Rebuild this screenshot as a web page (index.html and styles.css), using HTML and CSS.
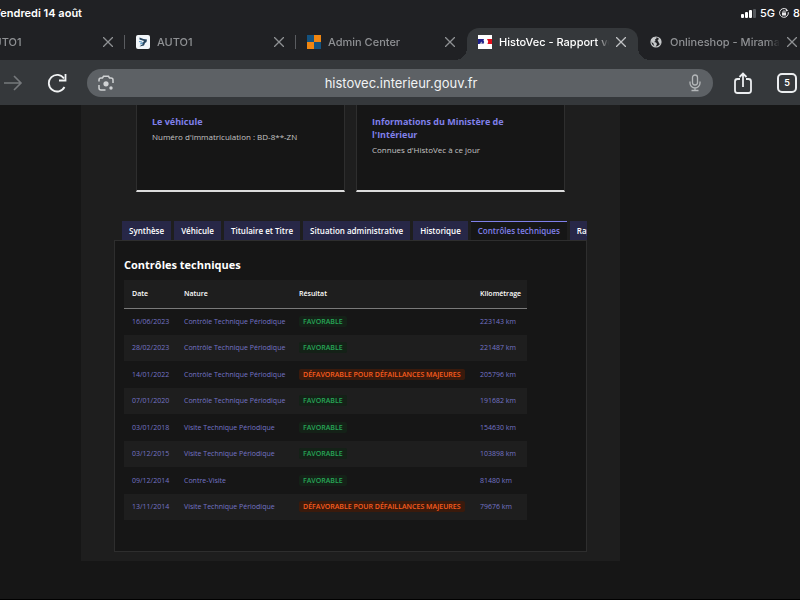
FILE: index.html
```html
<!DOCTYPE html>
<html lang="fr">
<head>
    <meta charset="UTF-8">
    <meta name="viewport" content="width=device-width, initial-scale=1.0">
    <title>HistoVec - Rapport véhicule</title>
    <link rel="stylesheet" href="styles.css">
</head>
<body>
    <header class="browser">
        <div class="status-bar">
            <span class="status-date">Vendredi 14 août</span>
            <div class="status-right">
                <svg viewBox="0 0 15 9" width="15" height="9">
                    <rect x="0" y="5" width="3" height="4" rx="1" fill="#fff"/>
                    <rect x="4" y="3" width="3" height="6" rx="1" fill="#fff"/>
                    <rect x="8" y="1" width="3" height="8" rx="1" fill="#fff"/>
                    <rect x="12" y="0" width="3" height="9" rx="1" fill="#55585c"/>
                </svg>
                <span>5G</span>
                <svg viewBox="0 0 10 10" width="10" height="10" fill="none" stroke="#e8e8ea">
                    <path d="M7.6 1.4A4.4 4.4 0 1 0 9.3 4.2"/>
                    <path d="M7 .6l2.3 2.2-2.6.7z" fill="#e8e8ea" stroke="none"/>
                    <rect x="3" y="4.6" width="4" height="2.8" rx=".5" fill="#e8e8ea" stroke="none"/>
                    <path d="M3.8 4.8V4a1.2 1.2 0 0 1 2.4 0v.8" stroke-width=".8"/>
                </svg>
                <span>8</span>
            </div>
        </div>

        <div class="tab-strip">
            <div class="browser-tab">
                <span class="favicon"></span>
                <span class="tab-title">AUTO1</span>
                <button class="close" aria-label="Fermer"><svg viewBox="0 0 10 10" width="10" height="10"><path d="M0 0L10 10M10 0L0 10"/></svg></button>
            </div>
            <div class="browser-tab">
                <svg class="favicon" viewBox="0 0 14 14">
                    <rect width="14" height="14" rx="2" fill="#f2f6fa"/>
                    <path d="M3.500 2.500l4 1.500 3.500.5-.5 2.500-1.500 1-1 2.500-4.500 1 2-1.700 1.500-.8-3-1 3-.5 1-1.500-4.500-1.500z" fill="#27455f"/>
                    <path d="M3 6.500l3 .5M4 9l3-1" stroke="#5b9bc9"/>
                </svg>
                <span class="tab-title">AUTO1</span>
                <button class="close" aria-label="Fermer"><svg viewBox="0 0 10 10" width="10" height="10"><path d="M0 0L10 10M10 0L0 10"/></svg></button>
            </div>
            <div class="browser-tab">
                <svg class="favicon" viewBox="0 0 14 14">
                    <rect width="7" height="7" fill="#14527f"/>
                    <rect x="7" width="7" height="7" fill="#ee8511"/>
                    <rect y="7" width="7" height="7" fill="#ee8511"/>
                    <rect x="7" y="7" width="7" height="7" fill="#14527f"/>
                </svg>
                <span class="tab-title">Admin Center</span>
                <button class="close" aria-label="Fermer"><svg viewBox="0 0 10 10" width="10" height="10"><path d="M0 0L10 10M10 0L0 10"/></svg></button>
            </div>
            <div class="browser-tab active">
                <svg class="favicon" viewBox="0 0 14 14">
                    <rect width="14" height="14" fill="#fff"/>
                    <path d="M0 4h6l-.5 1.500.7 1.500-1 2H0z" fill="#20208c"/>
                    <path d="M1.500 9L3.500 6.500 5 9z" fill="#a9abc4"/>
                    <path d="M9 4h5v5H9.500l.7-2.500z" fill="#e1101c"/>
                </svg>
                <span class="tab-title">HistoVec - Rapport véhicule</span>
                <button class="close" aria-label="Fermer"><svg viewBox="0 0 10 10" width="10" height="10"><path d="M0 0L10 10M10 0L0 10"/></svg></button>
            </div>
            <div class="browser-tab">
                <svg class="favicon" viewBox="0 0 14 14">
                    <circle cx="7" cy="7" r="5" fill="none" stroke="#c6c8ca" stroke-width="1.200"/>
                    <path d="M2 5l2-2.500L7 2l.5 1.500L6 4.500 6.500 6 5 7l2 .5 1 1.500-1.500 3L5 10.500 4.500 8.500 2.500 7zM8.500 5L11 3.500l1 2.500v2l-1.500 1L9.500 7z" fill="#c6c8ca"/>
                </svg>
                <span class="tab-title">Onlineshop - Miramar</span>
                <button class="close" aria-label="Fermer"><svg viewBox="0 0 10 10" width="10" height="10"><path d="M0 0L10 10M10 0L0 10"/></svg></button>
            </div>
        </div>

        <div class="toolbar">
            <button aria-label="Suivant">
                <svg viewBox="0 0 20 20" width="20" height="20" fill="none" stroke="#76797c" stroke-width="1.600"><path d="M1 10h17M11 3l7 7-7 7"/></svg>
            </button>
            <button aria-label="Actualiser">
                <svg viewBox="0 0 20 20" width="20" height="20" fill="none" stroke="#f1f3f4" stroke-width="1.800"><path d="M17 5.500A8.300 8.300 0 1 0 17.500 14"/><path d="M18.500 1v6.500H12"/></svg>
            </button>
            <div class="omnibox">
                <button aria-label="Recherche visuelle">
                    <svg viewBox="0 0 16 16" width="16" height="16" fill="none" stroke="#d0d2d4" stroke-width="1.500">
                        <path d="M1 6.500V5a2 2 0 0 1 2-2h1.500l1-1.700h5l1 1.700H13a2 2 0 0 1 2 2v3M1 10v3a2 2 0 0 0 2 2h4.500"/>
                        <circle cx="8" cy="8.800" r="2.600" fill="#d0d2d4" stroke="none"/>
                        <circle cx="13" cy="13" r="1.700" fill="#d0d2d4" stroke="none"/>
                    </svg>
                </button>
                <input class="address" type="text" value="histovec.interieur.gouv.fr" aria-label="Adresse">
                <button aria-label="Recherche vocale">
                    <svg viewBox="0 0 14 18" width="14" height="18" fill="none" stroke="#b4b7b9" stroke-width="1.300">
                        <rect x="4.500" y="1" width="5" height="10" rx="2.500"/>
                        <path d="M2 7.500V9a5 5 0 0 0 10 0V7.500M7 14v2.500M3.500 16.500h7"/>
                    </svg>
                </button>
            </div>
            <button aria-label="Partager">
                <svg viewBox="0 0 20 24" width="20" height="24" fill="none" stroke="#eceef0" stroke-width="1.800">
                    <path d="M7 8H4.500A2.500 2.500 0 0 0 2 10.500v9A2.500 2.500 0 0 0 4.500 22h11a2.500 2.500 0 0 0 2.500-2.500v-9A2.500 2.500 0 0 0 15.500 8H13M10 16V2.500M6.500 6L10 2.500 13.500 6"/>
                </svg>
            </button>
            <button class="tab-count" aria-label="5 onglets">5</button>
        </div>
    </header>

    <main class="report">
        <div class="cards">
            <section class="card">
                <h2><a href="#">Le véhicule</a></h2>
                <p>Numéro d'immatriculation : BD-8**-ZN</p>
            </section>
            <section class="card">
                <h2><a href="#">Informations du Ministère de l'Intérieur</a></h2>
                <p>Connues d'HistoVec à ce jour</p>
            </section>
        </div>

        <div class="tabs">
            <div class="tab-list" role="tablist">
                <button role="tab">Synthèse</button>
                <button role="tab">Véhicule</button>
                <button role="tab">Titulaire et Titre</button>
                <button role="tab">Situation administrative</button>
                <button role="tab">Historique</button>
                <button role="tab" class="selected" aria-selected="true">Contrôles techniques</button>
                <button role="tab">Rapport</button>
            </div>
            <div class="panel" role="tabpanel">
                <h3>Contrôles techniques</h3>
                <table>
                    <thead>
                        <tr><th class="col-date">Date</th><th class="col-nature">Nature</th><th class="col-result">Résultat</th><th>Kilométrage</th></tr>
                    </thead>
                    <tbody>
                        <tr><td>16/06/2023</td><td>Contrôle Technique Périodique</td><td><span class="badge success">Favorable</span></td><td>223143 km</td></tr>
                        <tr><td>28/02/2023</td><td>Contrôle Technique Périodique</td><td><span class="badge success">Favorable</span></td><td>221487 km</td></tr>
                        <tr><td>14/01/2022</td><td>Contrôle Technique Périodique</td><td><span class="badge warning">Défavorable pour défaillances majeures</span></td><td>205796 km</td></tr>
                        <tr><td>07/01/2020</td><td>Contrôle Technique Périodique</td><td><span class="badge success">Favorable</span></td><td>191682 km</td></tr>
                        <tr><td>03/01/2018</td><td>Visite Technique Périodique</td><td><span class="badge success">Favorable</span></td><td>154630 km</td></tr>
                        <tr><td>03/12/2015</td><td>Visite Technique Périodique</td><td><span class="badge success">Favorable</span></td><td>103898 km</td></tr>
                        <tr><td>09/12/2014</td><td>Contre-Visite</td><td><span class="badge success">Favorable</span></td><td>81480 km</td></tr>
                        <tr><td>13/11/2014</td><td>Visite Technique Périodique</td><td><span class="badge warning">Défavorable pour défaillances majeures</span></td><td>79676 km</td></tr>
                    </tbody>
                </table>
            </div>
        </div>
    </main>
</body>
</html>
```
FILE: styles.css
```css
:root {
    --chrome-dark: #202124;
    --chrome: #35383b;
    --page: #161616;
    --container: #1e1e1e;
    --border: #2e2e2e;
    --blue: #8080ea;
    --blue-text: #7474c6;
}

* {
    margin: 0;
    padding: 0;
    box-sizing: border-box;
}

body {
    min-height: 100vh;
    background: var(--page);
    border-bottom: 1px solid #000;
    color: #fff;
    font-family: "Open Sans", "Noto Sans", sans-serif;
    font-size: 7px;
}

button {
    border: none;
    background: none;
    color: inherit;
    font: inherit;
    cursor: pointer;
}

svg {
    display: block;
    flex: none;
}

.browser {
    overflow: hidden;
    background: var(--chrome-dark);
    font: 500 11px Inter, sans-serif;
}

/* Status bar */
.status-bar {
    display: flex;
    justify-content: space-between;
    align-items: center;
    height: 28px;
    margin-left: -7px;
    padding-bottom: 2px;
    white-space: nowrap;
}

.status-date {
    font-size: 11px;
    font-weight: 600;
}

.status-right {
    display: flex;
    align-items: center;
    gap: 4px;
}

/* Browser tabs */
.tab-strip {
    display: flex;
    height: 32px;
    margin-left: -46px;
    color: #8f9194;
}

.browser-tab {
    position: relative;
    flex: 0 0 171px;
    min-width: 0;
    display: flex;
    align-items: center;
    gap: 7px;
    padding: 0 12px 4px 11px;
}

.browser-tab:nth-child(-n+2)::after {
    content: '';
    position: absolute;
    right: 0;
    top: 7px;
    width: 1px;
    height: 14px;
    background: #5a5c60;
}

.favicon {
    width: 14px;
    height: 14px;
    flex: none;
}

.tab-title {
    flex: 1;
    min-width: 0;
    overflow: hidden;
    white-space: nowrap;
    mask-image: linear-gradient(to right, #000 88%, transparent);
}

.close svg {
    fill: none;
    stroke: #8f9194;
    stroke-width: 1.3;
}

.browser-tab.active {
    background: var(--chrome);
    border-radius: 12px 12px 0 0;
    color: #fff;
}

.active .close svg {
    stroke: #c0c2c4;
}

.browser-tab.active::before,
.browser-tab.active::after {
    content: '';
    position: absolute;
    bottom: 0;
    width: 12px;
    height: 12px;
}

.browser-tab.active::before {
    right: 100%;
    background: radial-gradient(circle at 0 0, transparent 12px, var(--chrome) 12px);
}

.browser-tab.active::after {
    left: 100%;
    background: radial-gradient(circle at 100% 0, transparent 12px, var(--chrome) 12px);
}

/* Toolbar */
.toolbar {
    display: flex;
    align-items: center;
    gap: 24px;
    height: 45px;
    padding: 0 3px;
    background: var(--chrome);
}

.omnibox {
    flex: 1;
    display: flex;
    align-items: center;
    height: 28px;
    margin: 0 -4px;
    padding: 0 11px;
    border-radius: 14px;
    background: #5d6165;
}

.address {
    flex: 1;
    min-width: 0;
    border: none;
    outline: none;
    background: none;
    color: #f1f3f4;
    font: 13px Inter, sans-serif;
    text-align: center;
}

.tab-count {
    width: 20px;
    height: 20px;
    flex: none;
    border: 2px solid #eceef0;
    border-radius: 5px;
    font-size: 9px;
    font-weight: 600;
}

/* Report */
.report {
    margin: 0 180px 0 81px;
    padding: 0 33px 9px;
    background: var(--container);
}

.cards {
    display: grid;
    grid-template-columns: 1fr 1fr;
    gap: 11px;
    padding: 0 22px;
}

.card {
    min-height: 87px;
    padding: 10px 30px 10px 15px;
    background: var(--page);
    border: 1px solid var(--border);
    border-top: none;
    border-bottom: 2px solid #dcdcdc;
}

.card h2 {
    margin-bottom: 3px;
    font-size: 9px;
    font-weight: 700;
    line-height: 13px;
}

.card a {
    color: var(--blue);
    text-decoration: none;
}

.card p {
    color: #c4c4c4;
    font-size: 8px;
    line-height: 12px;
    white-space: nowrap;
}

.tabs {
    margin-top: 29px;
}

.tab-list {
    display: flex;
    gap: 3px;
    padding-left: 8px;
    overflow: hidden;
}

.tab-list button {
    flex: none;
    height: 19px;
    padding: 0 7px 1px;
    background: #272747;
    font-size: 8px;
    font-weight: 600;
    white-space: nowrap;
}

.tab-list .selected {
    background: var(--page);
    border-top: 1px solid var(--blue);
    color: var(--blue);
}

.panel {
    min-height: 312px;
    padding: 16px 59px 30px 9px;
    background: var(--page);
    border: 1px solid var(--border);
}

.panel h3 {
    margin-bottom: 8px;
    font-size: 11px;
    font-weight: 700;
    line-height: 15px;
}

table {
    width: 100%;
    table-layout: fixed;
    border-collapse: collapse;
    text-align: left;
    white-space: nowrap;
}

th,
td {
    height: 27px;
    padding: 0 8px;
    line-height: 12px;
}

th {
    height: 28px;
    border-bottom: 1px solid #7a7a7a;
    font-weight: 600;
}

thead,
tbody tr:nth-child(even) {
    background: var(--container);
}

tbody tr:nth-child(even) td {
    height: 26px;
}

td {
    color: var(--blue-text);
}

.col-date {
    width: 52px;
}

.col-nature {
    width: 115px;
}

.col-result {
    width: 181px;
}

.badge {
    display: inline-block;
    padding: 0 4px;
    border-radius: 2px;
    font-weight: 600;
    line-height: 11px;
    text-transform: uppercase;
}

.success {
    background: #142117;
    color: #27a658;
}

.warning {
    background: #3a1a0c;
    color: #f95c1e;
}
```
